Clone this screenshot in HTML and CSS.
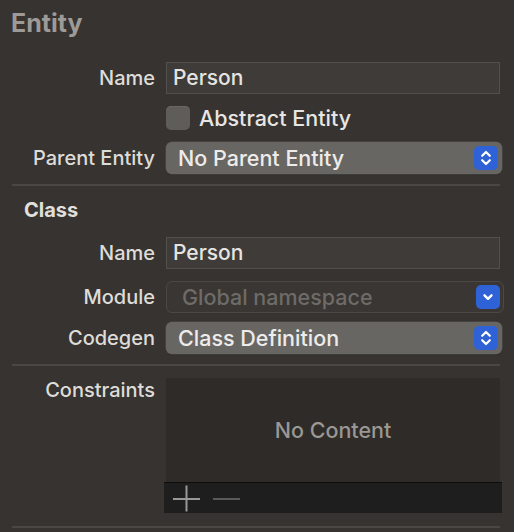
FILE: index.html
```html
<!DOCTYPE html>
<html>
<head>
<meta charset="utf-8">
<link rel="stylesheet" href="styles.css">
</head>
<body>
<div class="panel">
  <div class="title">Entity</div>
  <div class="rows first">
    <div class="row">
      <div class="label">Name</div>
      <div class="field"><div class="textfield">Person</div></div>
    </div>
    <div class="row">
      <div class="label"></div>
      <div class="field check"><span class="box"></span><span class="checklabel">Abstract Entity</span></div>
    </div>
    <div class="row">
      <div class="label">Parent Entity</div>
      <div class="field">
        <div class="popup"><span>No Parent Entity</span>
          <span class="stepper"><svg width="24" height="24" viewBox="0 0 24 24"><path d="M8.2 9.8 L12 6 L15.8 9.8 M8.2 14.2 L12 18 L15.8 14.2" fill="none" stroke="#fff" stroke-width="2.2" stroke-linecap="round" stroke-linejoin="round"/></svg></span>
        </div>
      </div>
    </div>
  </div>
  <div class="sep"></div>
  <div class="subtitle">Class</div>
  <div class="rows second">
    <div class="row">
      <div class="label">Name</div>
      <div class="field"><div class="textfield">Person</div></div>
    </div>
    <div class="row module">
      <div class="label">Module</div>
      <div class="field">
        <div class="popup disabled"><span>Global namespace</span>
          <span class="stepper"><svg width="24" height="24" viewBox="0 0 24 24"><path d="M8.5 10.3 L12 13.8 L15.5 10.3" fill="none" stroke="#fff" stroke-width="2.4" stroke-linecap="round" stroke-linejoin="round"/></svg></span>
        </div>
      </div>
    </div>
    <div class="row codegen">
      <div class="label">Codegen</div>
      <div class="field">
        <div class="popup"><span>Class Definition</span>
          <span class="stepper"><svg width="24" height="24" viewBox="0 0 24 24"><path d="M8.2 9.8 L12 6 L15.8 9.8 M8.2 14.2 L12 18 L15.8 14.2" fill="none" stroke="#fff" stroke-width="2.2" stroke-linecap="round" stroke-linejoin="round"/></svg></span>
        </div>
      </div>
    </div>
  </div>
  <div class="sep"></div>
  <div class="constraints">
    <div class="label">Constraints</div>
    <div class="table">
      <div class="tablebody">No Content</div>
      <div class="tablefoot">
        <svg width="80" height="30" viewBox="0 0 80 30"><path d="M7 16 H34 M20.5 2.5 V28.5" stroke="#9a9896" stroke-width="2"/><path d="M47 16 H74" stroke="#5a5957" stroke-width="2"/></svg>
      </div>
    </div>
  </div>
  <div class="sep bottom"></div>
</div>
</body>
</html>
```
FILE: styles.css
```css
html, body {
  margin: 0;
  padding: 0;
  background: #363330;
}
body {
  width: 514px;
  height: 532px;
  overflow: hidden;
  font-family: Inter, "Noto Sans", "Liberation Sans", sans-serif;
  color: #dedcd9;
}
.panel {
  padding-top: 8px;
}
.title {
  font-size: 25px;
  font-weight: 700;
  color: #9d9a97;
  padding-left: 11px;
  line-height: 30px;
  height: 30px;
}
.rows {
  display: flex;
  flex-direction: column;
  gap: 8px;
}
.rows.first {
  margin-top: 24px;
}
.row {
  display: flex;
  align-items: center;
  height: 32px;
}
.label {
  width: 155px;
  flex: none;
  text-align: right;
  font-size: 20px;
  font-weight: 500;
  color: #dedcd9;
  white-space: nowrap;
}
.field {
  width: 334px;
  margin-left: 11px;
  flex: none;
}
.textfield {
  box-sizing: border-box;
  height: 32px;
  background: #3e3b38;
  border: 1px solid #52504d;
  padding-left: 6px;
  font-size: 21px;
  font-weight: 500;
  line-height: 30px;
  color: #e6e4e1;
}
.check {
  display: flex;
  align-items: center;
}
.box {
  width: 24px;
  height: 24px;
  border-radius: 5px;
  background: #5f5d5a;
  box-shadow: inset 0 1px 0 #6a6865;
}
.checklabel {
  margin-left: 9px;
  font-size: 21.5px;
  font-weight: 500;
  color: #e8e6e3;
}
.popup {
  box-sizing: border-box;
  width: 336px;
  height: 32px;
  border-radius: 6px;
  background: #686663;
  box-shadow: 0 0 0 0.5px #555350, 0 1px 1px rgba(0,0,0,0.25);
  display: flex;
  align-items: center;
  justify-content: space-between;
  padding: 0 4px 0 12px;
  font-size: 21.5px;
  font-weight: 500;
  color: #eeecea;
}
.popup.disabled {
  width: 338px;
  background: #393633;
  border: 1px solid #4b4845;
  box-shadow: none;
  color: #6e6b68;
  padding: 0 3px 0 15px;
}
.stepper {
  width: 24px;
  height: 24px;
  border-radius: 5px;
  background: #2f62d6;
  display: block;
}
.stepper svg {
  display: block;
}
.sep {
  height: 2px;
  margin: 10px 14px 0 12px;
  background: #4a4744;
}
.subtitle {
  font-size: 20px;
  font-weight: 700;
  color: #e2e0dd;
  padding-left: 24px;
  margin-top: 12px;
  line-height: 24px;
}
.rows.second {
  margin-top: 15px;
  gap: 0;
}
.row.module {
  margin-top: 12px;
}
.row.codegen {
  margin-top: 9px;
}
.constraints {
  display: flex;
  align-items: flex-start;
  margin-top: 12px;
}
.constraints .label {
  line-height: 24px;
}
.table {
  margin-left: 11px;
  width: 334px;
}
.tablebody {
  height: 104px;
  background: #2e2b28;
  display: flex;
  align-items: center;
  justify-content: center;
  font-size: 21.5px;
  font-weight: 500;
  color: #9a9794;
}
.tablefoot {
  height: 31px;
  background: #1e1e1e;
  border-top: 1.5px solid #0d0d0d;
  margin: 0 -2px 0 -2px;
  padding-left: 2px;
  box-sizing: border-box;
}
.tablefoot svg {
  display: block;
}
.sep.bottom {
  margin-top: 13px;
}
```
